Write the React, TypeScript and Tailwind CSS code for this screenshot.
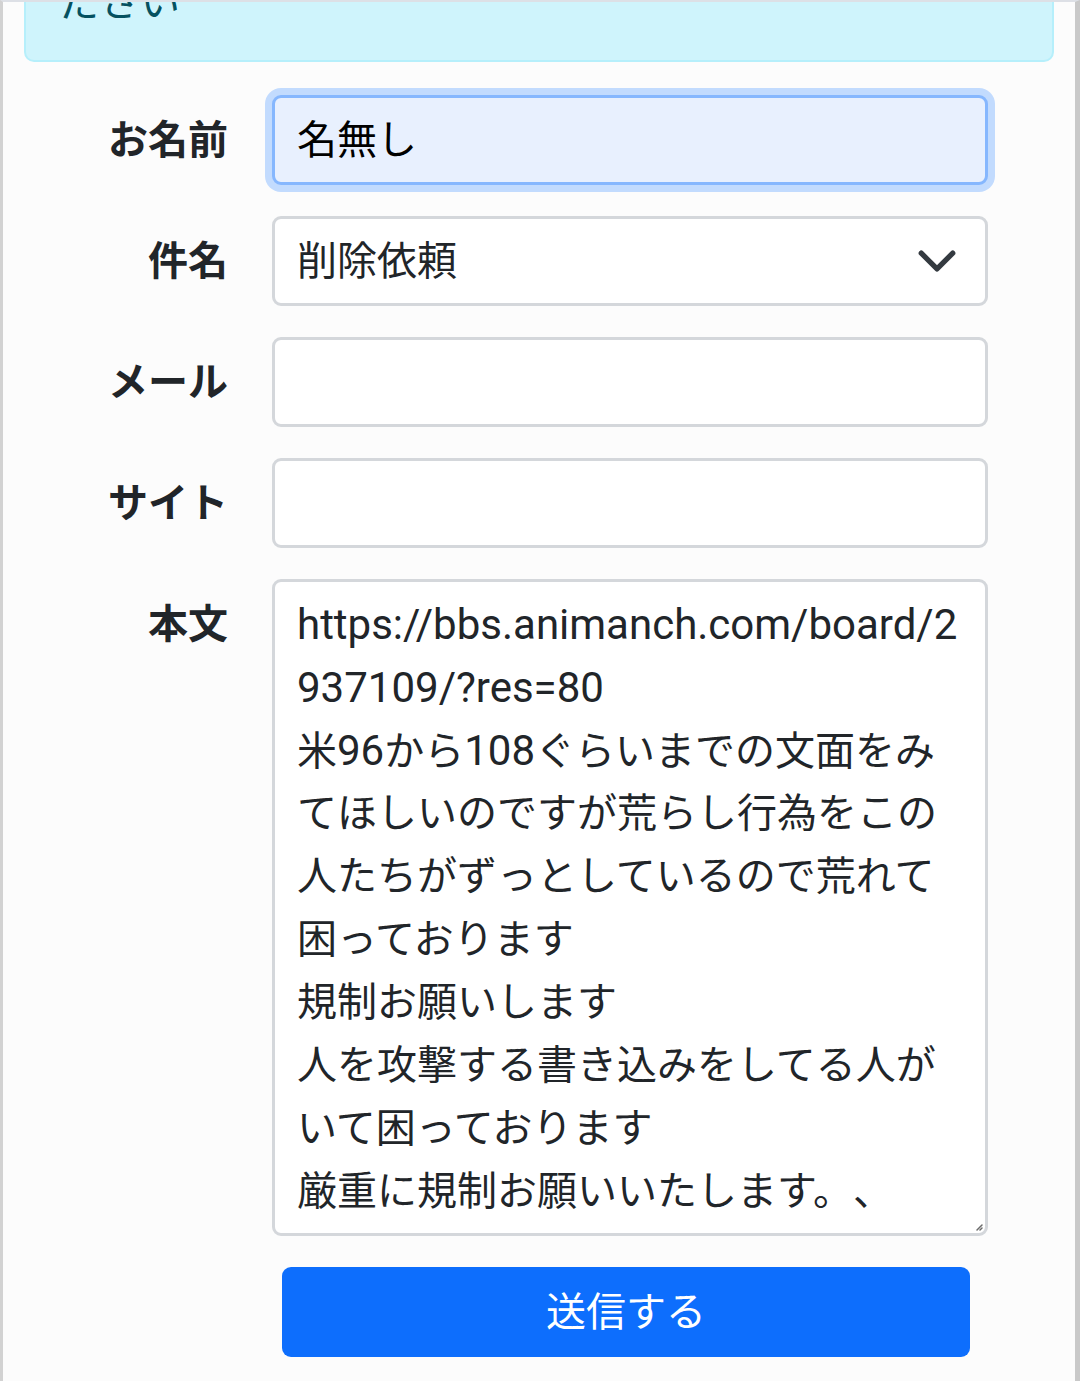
import React from 'react';

const FONT = "font-['Roboto','Noto_Sans_CJK_JP',sans-serif]";

// Latin runs render a touch larger than the CJK glyphs on the device
const L: React.FC<{ children: React.ReactNode }> = ({ children }) => (
  <span className="text-[42px]">{children}</span>
);

// Visual lines of the 本文 textarea, as wrapped on the device
const bodyLines: React.ReactNode[] = [
  <L>https://bbs.animanch.com/board/2</L>,
  <L>937109/?res=80</L>,
  <>
    米<L>96</L>から<L>108</L>ぐらいまでの文面をみ
  </>,
  'てほしいのですが荒らし行為をこの',
  '人たちがずっとしているので荒れて',
  '困っております',
  '規制お願いします',
  '人を攻撃する書き込みをしてる人が',
  'いて困っております',
  '厳重に規制お願いいたします。、',
];

const Label: React.FC<{ children: React.ReactNode }> = ({ children }) => (
  <div className="w-[204px] shrink-0 pt-[13.5px] text-right text-[40px] font-bold leading-[63px] text-[#212529]">
    {children}
  </div>
);

const Field: React.FC<{ label: string; children: React.ReactNode }> = ({ label, children }) => (
  <div className="flex">
    <Label>{label}</Label>
    <div className="ml-[44px] w-[716px]">{children}</div>
  </div>
);

const boxBase =
  'h-[90px] w-full rounded-[9px] border-[3px] px-[22px] flex items-center text-[40px] leading-[63px]';

export default function App() {
  return (
    <div
      className={`${FONT} h-[1381px] w-[1080px] overflow-hidden border-l-[3px] border-r-[5px] border-t-[2px] border-l-[#d2d2d2] border-r-[#c9c9c9] border-t-[#dde0e6] bg-[#fcfcfc] [text-spacing-trim:space-all]`}
    >
      <div className="px-[21px]">
        {/* Info alert, scrolled mostly out of view */}
        <div className="mt-[-33px] rounded-[10px] border-2 border-[#b6effb] bg-[#cff4fc] px-[34px] pb-[26px] text-[40px] leading-[63px] text-[#055160]">
          ださい
        </div>

        <div className="mt-[33px] flex flex-col gap-[31px]">
          <Field label="お名前">
            <div
              className={`${boxBase} border-[#86b7fe] bg-[#e8f0fe] text-black shadow-[0_0_0_7px_#c2dbfe]`}
            >
              名無し
            </div>
          </Field>

          <Field label="件名">
            <div className={`${boxBase} justify-between border-[#d4d7db] bg-white pr-[27px] text-[#212529]`}>
              <span>削除依頼</span>
              <svg width="42" height="42" viewBox="0 0 16 16" fill="none">
                <path
                  d="M2 5l6 6 6-6"
                  stroke="#343a40"
                  strokeWidth="2"
                  strokeLinecap="round"
                  strokeLinejoin="round"
                />
              </svg>
            </div>
          </Field>

          <Field label="メール">
            <div className={`${boxBase} border-[#d4d7db] bg-white`} />
          </Field>

          <Field label="サイト">
            <div className={`${boxBase} border-[#d4d7db] bg-white`} />
          </Field>

          <Field label="本文">
            <div className="relative w-full rounded-[9px] border-[3px] border-[#d4d7db] bg-white px-[22px] py-[10.5px] text-[40px] leading-[63px] text-[#212529]">
              {bodyLines.map((line, i) => (
                <div key={i} className="h-[63px] whitespace-nowrap">
                  {line}
                </div>
              ))}
              <svg
                className="absolute bottom-[2px] right-[2px]"
                width="8"
                height="8"
                viewBox="0 0 8 8"
              >
                <path d="M7 2L2 7M7 5L5 7" stroke="#6b6b6b" strokeWidth="1.5" strokeLinecap="round" />
              </svg>
            </div>
          </Field>

          <div className="flex">
            <div className="ml-[258px] flex h-[90px] w-[688px] items-center justify-center rounded-[9px] bg-[#0d6efd] text-[40px] leading-[63px] text-white">
              送信する
            </div>
          </div>
        </div>
      </div>
    </div>
  );
}
